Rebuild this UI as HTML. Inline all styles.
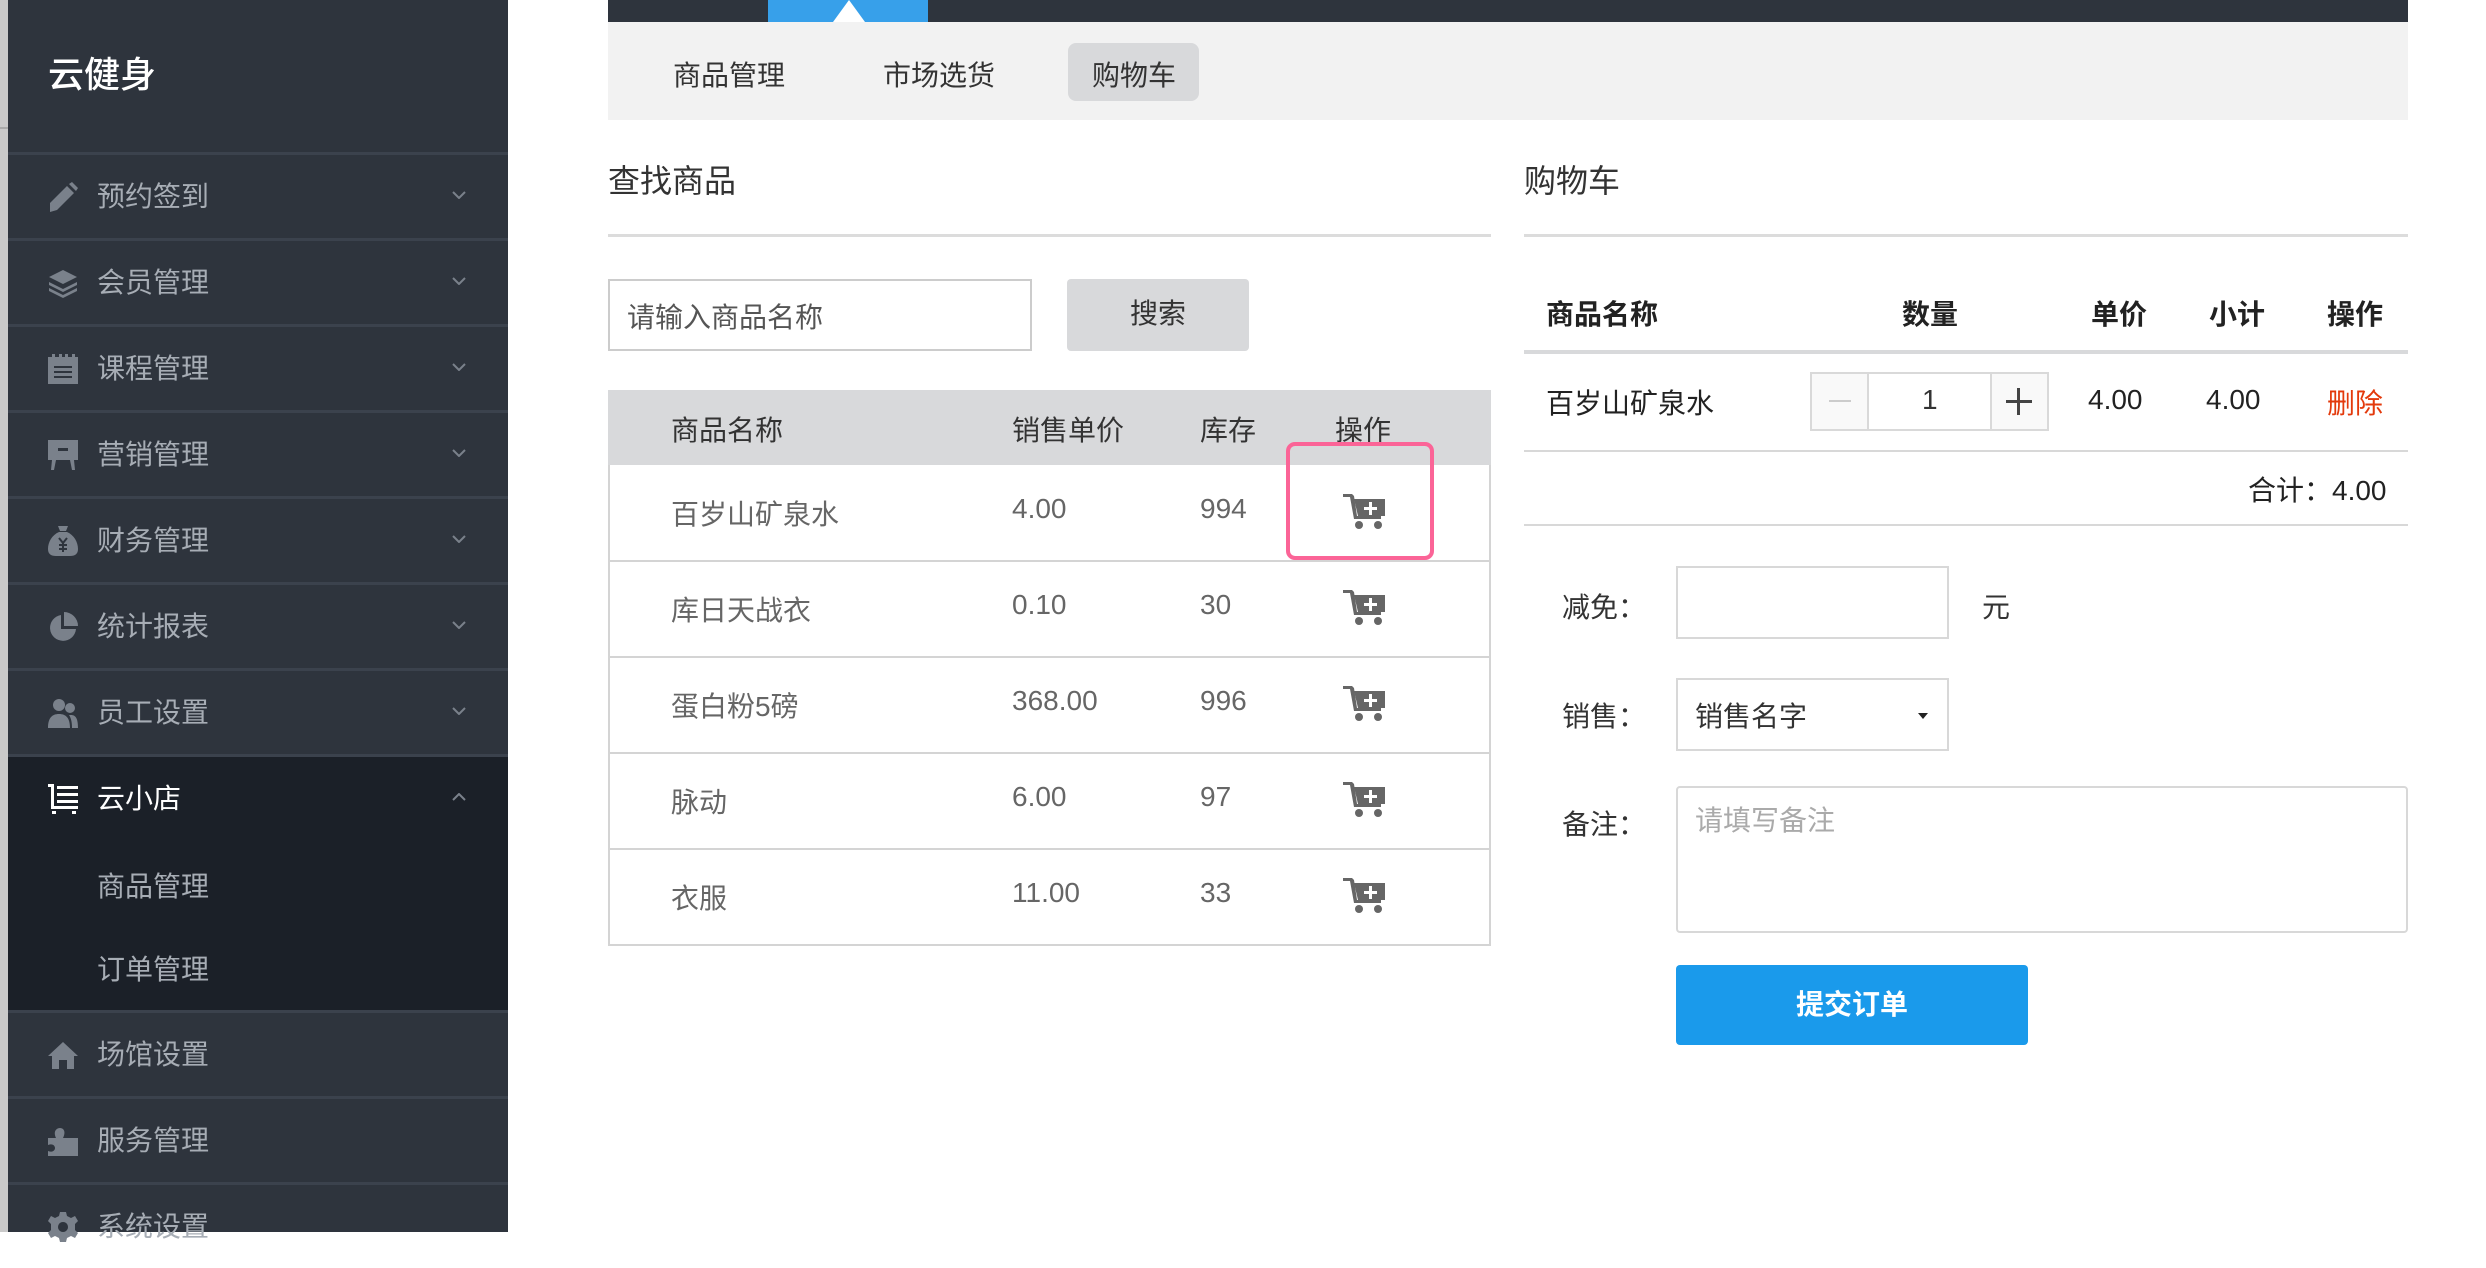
<!DOCTYPE html>
<html><head><meta charset="utf-8">
<style>
*{margin:0;padding:0;box-sizing:border-box}
body{width:2486px;height:1232px;overflow:hidden;background:#fff;position:relative;font-family:"Liberation Sans","Noto Sans CJK SC",sans-serif;color:#333}
.a{position:absolute}
#strip{left:0;top:0;width:8px;height:1232px;background:#c9c9c9}
#strip2{left:0;top:127px;width:8px;height:2px;background:#a9a9a9}
#side{left:8px;top:0;width:500px;height:1232px;background:#2e343d}
.title{left:40px;top:46px;font-size:36px;color:#fff;font-weight:500}
.item{position:absolute;left:0;width:500px;height:86px;border-top:3px solid #3b424d}
.item .t{position:absolute;left:89px;top:0;line-height:83px;font-size:28px;color:#a7adb5}
.item svg.ic{position:absolute;left:40px;top:27px;width:30px;height:30px;fill:#7a818b}
.item .ch{position:absolute;left:444px;top:36px;width:14px;height:8px}
.active{background:#1b2028}
.sub{position:absolute;left:89px;font-size:28px;color:#a7adb5}
.topbar{left:608px;top:0;width:1800px;height:22px;background:#2e343d}
.bluetab{left:768px;top:0;width:160px;height:22px;background:#37a0ea}
.tri{left:833px;top:0;width:0;height:0;border-left:16px solid transparent;border-right:16px solid transparent;border-bottom:22px solid #fff}
.tabbar{left:608px;top:22px;width:1800px;height:98px;background:#f2f2f2}
.tab{top:54px;font-size:28px;color:#333}
.pill{left:1068px;top:43px;width:131px;height:58px;background:#d8d9db;border-radius:8px}
h3{position:absolute;font-size:32px;font-weight:normal;color:#333}
.hr{height:3px;background:#dcdcdc}
.inp{border:2px solid #ccc;background:#fff}
.th{font-size:28px;color:#333}
.cell{font-size:28px;color:#666}
.rowline{left:608px;width:883px;height:2px;background:#d4d4d4}
.cart{width:44px;height:38px}
.bold{font-weight:bold;color:#222;font-size:28px}
</style></head><body>
<div class="a" id="strip"></div><div class="a" id="strip2"></div>
<div class="a" id="side">
 <div class="a title">云健身</div>
 <div class="item" style="top:152px"><svg class="ic" viewBox="0 0 30 30"><path d="M2 30V21L19 4l7 7L9 28z M21 2l3-2 6 6-2 3z"/></svg><div class="t">预约签到</div><svg class="ch" viewBox="0 0 14 8"><path d="M1 1l6 6 6-6" stroke="#7a818b" stroke-width="2" fill="none"/></svg></div>
 <div class="item" style="top:238px"><svg class="ic" viewBox="0 0 30 30"><path d="M15 2L29 9 15 16 1 9z M1 14l14 7 14-7v3L15 24 1 17z M1 20l14 7 14-7v3L15 30 1 23z"/></svg><div class="t">会员管理</div><svg class="ch" viewBox="0 0 14 8"><path d="M1 1l6 6 6-6" stroke="#7a818b" stroke-width="2" fill="none"/></svg></div>
 <div class="item" style="top:324px"><svg class="ic" viewBox="0 0 30 30"><path d="M0 3h4V0h3v3h4V0h3v3h3V0h3v3h4V0h3v3h3v27H0z M6 12v2h18v-2z M6 17v2h18v-2z M6 22v2h18v-2z" fill-rule="evenodd"/></svg><div class="t">课程管理</div><svg class="ch" viewBox="0 0 14 8"><path d="M1 1l6 6 6-6" stroke="#7a818b" stroke-width="2" fill="none"/></svg></div>
 <div class="item" style="top:410px"><svg class="ic" viewBox="0 0 30 30"><path d="M0 0h30v20H0z M10 8v3h10V8z M4 20h4l-2 10H3z M22 20h4l1 10h-3z" fill-rule="evenodd"/></svg><div class="t">营销管理</div><svg class="ch" viewBox="0 0 14 8"><path d="M1 1l6 6 6-6" stroke="#7a818b" stroke-width="2" fill="none"/></svg></div>
 <div class="item" style="top:496px"><svg class="ic" viewBox="0 0 30 30"><path d="M10 0h10l-2 5h-6z M11 6h8c7 3 11 10 11 17 0 5-3 7-8 7H8c-5 0-8-2-8-7C0 16 4 9 11 6z"/><path d="M11 12l4 5 4-5 M15 17v9 M11 19h8 M11 23h8" stroke="#2e343d" stroke-width="2" fill="none"/></svg><div class="t">财务管理</div><svg class="ch" viewBox="0 0 14 8"><path d="M1 1l6 6 6-6" stroke="#7a818b" stroke-width="2" fill="none"/></svg></div>
 <div class="item" style="top:582px"><svg class="ic" viewBox="0 0 30 30"><path d="M13 3A13 13 0 1 0 28 17H13z M16 0v14h14A14 14 0 0 0 16 0z"/></svg><div class="t">统计报表</div><svg class="ch" viewBox="0 0 14 8"><path d="M1 1l6 6 6-6" stroke="#7a818b" stroke-width="2" fill="none"/></svg></div>
 <div class="item" style="top:668px"><svg class="ic" viewBox="0 0 30 30"><circle cx="11" cy="7" r="6"/><circle cx="22" cy="10" r="5"/><path d="M0 30c0-10 4-14 11-14s11 4 11 14z M23 17c5 0 7 4 7 13h-6c0-6-1-10-3-13z"/></svg><div class="t">员工设置</div><svg class="ch" viewBox="0 0 14 8"><path d="M1 1l6 6 6-6" stroke="#7a818b" stroke-width="2" fill="none"/></svg></div>
 <div class="item active" style="top:754px;height:256px">
  <svg class="ic" viewBox="0 0 30 30" style="fill:#fff"><path d="M0 0h6v22h24v3H3V3H0z M9 2h21v3H9z M9 9h21v3H9z M9 16h21v3H9z M4 27h4v3H4z M24 27h4v3h-4z"/></svg>
  <div class="t" style="color:#fff">云小店</div>
  <svg class="ch" viewBox="0 0 14 8"><path d="M1 7l6-6 6 6" stroke="#7a818b" stroke-width="2" fill="none"/></svg>
  <div class="sub" style="top:108px">商品管理</div>
  <div class="sub" style="top:191px">订单管理</div>
 </div>
 <div class="item" style="top:1010px"><svg class="ic" viewBox="0 0 30 30"><path d="M15 2L30 16h-4v13h-7v-9h-8v9H4V16H0z"/></svg><div class="t">场馆设置</div></div>
 <div class="item" style="top:1096px"><svg class="ic" viewBox="0 0 30 30"><path d="M0 12h8c-3-6 0-10 4-10s6 4 3 10h15v18H0v-5c5 2 7-1 7-3s-2-5-7-3z"/></svg><div class="t">服务管理</div></div>
 <div class="item" style="top:1182px"><svg class="ic" viewBox="0 0 30 30"><path d="M12 0h6l1 4 4 2 4-2 3 5-3 3v6l3 3-3 5-4-2-4 2-1 4h-6l-1-4-4-2-4 2-3-5 3-3v-6L0 9l3-5 4 2 4-2z M15 10a5 5 0 1 0 0.01 0z" fill-rule="evenodd"/></svg><div class="t">系统设置</div></div>
</div>

<div class="a topbar"></div><div class="a bluetab"></div><div class="a tri"></div>
<div class="a tabbar"></div>
<div class="a pill"></div>
<div class="a tab" style="left:673px">商品管理</div>
<div class="a tab" style="left:883px">市场选货</div>
<div class="a tab" style="left:1092px">购物车</div>

<h3 style="left:608px;top:156px">查找商品</h3>
<div class="a hr" style="left:608px;top:234px;width:883px"></div>
<h3 style="left:1524px;top:156px">购物车</h3>
<div class="a hr" style="left:1524px;top:234px;width:884px"></div>

<div class="a inp" style="left:608px;top:279px;width:424px;height:72px"></div>
<div class="a" style="left:627px;top:296px;font-size:28px;color:#555">请输入商品名称</div>
<div class="a" style="left:1067px;top:279px;width:182px;height:72px;background:#d8d9db;border-radius:4px;font-size:28px;line-height:70px;text-align:center;color:#333">搜索</div>

<div class="a" style="left:608px;top:390px;width:883px;height:556px;border:2px solid #d4d4d4;border-top:none"></div>
<div class="a" style="left:608px;top:390px;width:883px;height:75px;background:#d8d9db"></div>
<div class="a th" style="left:671px;top:409px">商品名称</div>
<div class="a th" style="left:1012px;top:409px">销售单价</div>
<div class="a th" style="left:1200px;top:409px">库存</div>
<div class="a th" style="left:1335px;top:409px">操作</div>

<div class="a rowline" style="top:560px"></div>
<div class="a rowline" style="top:656px"></div>
<div class="a rowline" style="top:752px"></div>
<div class="a rowline" style="top:848px"></div>

<div class="a cell" style="left:671px;top:493px">百岁山矿泉水</div><div class="a cell" style="left:1012px;top:493px">4.00</div><div class="a cell" style="left:1200px;top:493px">994</div>
<div class="a cell" style="left:671px;top:589px">库日天战衣</div><div class="a cell" style="left:1012px;top:589px">0.10</div><div class="a cell" style="left:1200px;top:589px">30</div>
<div class="a cell" style="left:671px;top:685px">蛋白粉5磅</div><div class="a cell" style="left:1012px;top:685px">368.00</div><div class="a cell" style="left:1200px;top:685px">996</div>
<div class="a cell" style="left:671px;top:781px">脉动</div><div class="a cell" style="left:1012px;top:781px">6.00</div><div class="a cell" style="left:1200px;top:781px">97</div>
<div class="a cell" style="left:671px;top:877px">衣服</div><div class="a cell" style="left:1012px;top:877px">11.00</div><div class="a cell" style="left:1200px;top:877px">33</div>

<svg width="0" height="0" style="position:absolute"><defs><symbol id="cart" viewBox="0 0 44 38"><path d="M0 2h9l2 2 3 20h24v3H11L7 5H0z" fill="#666"/><path d="M11 7h31v17H15z" fill="#666"/><path d="M26 10h3v5h5v3h-5v5h-3v-5h-5v-3h5z" fill="#fff"/><circle cx="16" cy="33" r="4" fill="#666"/><circle cx="35" cy="33" r="4" fill="#666"/></symbol></defs></svg>
<svg class="a cart" style="left:1343px;top:492px"><use href="#cart"/></svg>
<svg class="a cart" style="left:1343px;top:588px"><use href="#cart"/></svg>
<svg class="a cart" style="left:1343px;top:684px"><use href="#cart"/></svg>
<svg class="a cart" style="left:1343px;top:780px"><use href="#cart"/></svg>
<svg class="a cart" style="left:1343px;top:876px"><use href="#cart"/></svg>
<div class="a" style="left:1286px;top:442px;width:148px;height:118px;border:4px solid #fb6497;border-radius:9px"></div>

<div class="a bold" style="left:1546px;top:293px">商品名称</div>
<div class="a bold" style="left:1902px;top:293px">数量</div>
<div class="a bold" style="left:2091px;top:293px">单价</div>
<div class="a bold" style="left:2209px;top:293px">小计</div>
<div class="a bold" style="left:2327px;top:293px">操作</div>
<div class="a" style="left:1524px;top:350px;width:884px;height:4px;background:#d8d9db"></div>
<div class="a" style="left:1546px;top:382px;font-size:28px;color:#222">百岁山矿泉水</div>
<div class="a" style="left:1810px;top:372px;width:239px;height:59px;border:2px solid #d9d9d9;background:#fff"></div>
<div class="a" style="left:1812px;top:374px;width:57px;height:55px;background:#f9f9f9;border-right:2px solid #d9d9d9"></div>
<div class="a" style="left:1990px;top:374px;width:57px;height:55px;background:#f9f9f9;border-left:2px solid #d9d9d9"></div>
<div class="a" style="left:1829px;top:400px;width:22px;height:2px;background:#ccc"></div>
<div class="a" style="left:2006px;top:400px;width:26px;height:3px;background:#444"></div>
<div class="a" style="left:2017px;top:388px;width:3px;height:27px;background:#444"></div>
<div class="a" style="left:1922px;top:384px;font-size:28px;color:#333">1</div>
<div class="a" style="left:2088px;top:384px;font-size:28px;color:#222">4.00</div>
<div class="a" style="left:2206px;top:384px;font-size:28px;color:#222">4.00</div>
<div class="a" style="left:2327px;top:382px;font-size:28px;color:#e33a0c">删除</div>
<div class="a" style="left:1524px;top:450px;width:884px;height:2px;background:#d8d8d8"></div>
<div class="a" style="left:2248px;top:469px;font-size:28px;color:#222">合计：4.00</div>
<div class="a" style="left:1524px;top:524px;width:884px;height:2px;background:#d8d8d8"></div>

<div class="a" style="left:1562px;top:586px;font-size:28px;color:#333">减免：</div>
<div class="a inp" style="left:1676px;top:566px;width:273px;height:73px;border-color:#d8d8d8"></div>
<div class="a" style="left:1982px;top:586px;font-size:28px;color:#333">元</div>
<div class="a" style="left:1562px;top:695px;font-size:28px;color:#333">销售：</div>
<div class="a inp" style="left:1676px;top:678px;width:273px;height:73px;border-color:#d8d8d8"></div>
<div class="a" style="left:1695px;top:695px;font-size:28px;color:#333">销售名字</div>
<div class="a" style="left:1918px;top:713px;width:0;height:0;border-left:5px solid transparent;border-right:5px solid transparent;border-top:6px solid #222"></div>
<div class="a" style="left:1562px;top:803px;font-size:28px;color:#333">备注：</div>
<div class="a inp" style="left:1676px;top:786px;width:732px;height:147px;border-color:#d8d8d8;border-radius:4px"></div>
<div class="a" style="left:1695px;top:799px;font-size:28px;color:#aaa">请填写备注</div>
<div class="a" style="left:1676px;top:965px;width:352px;height:80px;background:#1a9aeb;border-radius:4px;color:#fff;font-weight:bold;font-size:28px;line-height:80px;text-align:center">提交订单</div>
</body></html>
